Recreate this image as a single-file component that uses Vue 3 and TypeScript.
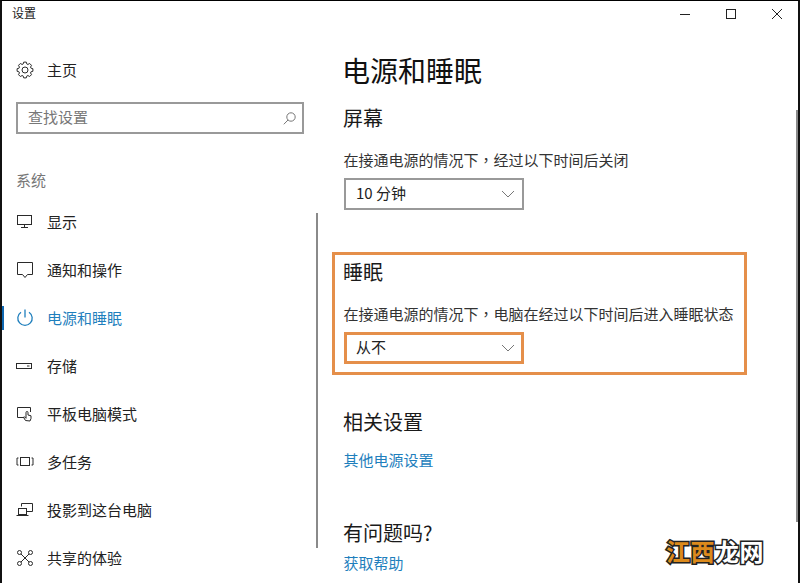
<template>
  <div class="window">
    <header class="titlebar">
      <span class="app-title">设置</span>
      <div class="controls">
        <span class="ctl"><svg width="12" height="12" viewBox="0 0 12 12"><path d="M1 6.500h10" /></svg></span>
        <span class="ctl"><svg width="12" height="12" viewBox="0 0 12 12"><rect x="1.500" y="1.500" width="9" height="9" /></svg></span>
        <span class="ctl"><svg width="12" height="12" viewBox="0 0 12 12"><path d="M1 1l10 10M11 1L1 11" /></svg></span>
      </div>
    </header>

    <div class="body">
      <aside class="sidebar">
        <div class="row home">
          <span class="icon">
            <svg width="18" height="18" viewBox="0 0 18 18"><path :d="gearPath" /><circle cx="9" cy="9" r="3" /></svg>
          </span>
          <span>主页</span>
        </div>
        <div class="search">
          <span class="label">查找设置</span>
          <svg width="13" height="13" viewBox="0 0 13 13"><circle cx="8" cy="5" r="4.200" /><path d="M5 8L.8 12.300" /></svg>
        </div>
        <div class="group-label">系统</div>
        <nav class="nav">
          <div v-for="item in navItems" :key="item.label" class="row" :class="{ active: item.active }">
            <span class="icon">
              <svg width="18" height="18" viewBox="0 0 18 18" v-html="item.icon"></svg>
            </span>
            <span>{{ item.label }}</span>
          </div>
        </nav>
        <div class="scroll side-scroll"></div>
      </aside>

      <main class="content">
        <h1>电源和睡眠</h1>
        <h2 class="screen-head">屏幕</h2>
        <p class="desc">在接通电源的情况下<span class="punct">，</span>经过以下时间后关闭</p>
        <div class="select">
          <span class="label">10 分钟</span>
          <svg width="14" height="8" viewBox="0 0 14 8"><path d="M1 1l6 6 6-6" /></svg>
        </div>

        <section class="sleep">
          <h2>睡眠</h2>
          <p class="desc">在接通电源的情况下<span class="punct">，</span>电脑在经过以下时间后进入睡眠状态</p>
          <div class="select marked">
            <span class="label">从不</span>
            <svg width="14" height="8" viewBox="0 0 14 8"><path d="M1 1l6 6 6-6" /></svg>
          </div>
        </section>

        <h2 class="related-head">相关设置</h2>
        <a class="link related-link">其他电源设置</a>
        <h2 class="help-head">有问题吗?</h2>
        <a class="link help-link">获取帮助</a>
      </main>
    </div>

    <div class="scroll main-scroll"></div>
    <div class="watermark"><span class="orange">江西</span>龙网</div>
  </div>
</template>

<script setup lang="ts">
// outline of the settings cog, 8 teeth
function buildGear(): string {
  const pts: string[] = [];
  const steps = 8;
  for (let i = 0; i < steps; i++) {
    const a = (i / steps) * Math.PI * 2;
    const spread = 0.2;
    const gap = Math.PI / steps - spread;
    const list: [number, number][] = [
      [6.2, a - spread - gap * 0.6],
      [8, a - spread * 0.8],
      [8, a + spread * 0.8],
      [6.2, a + spread + gap * 0.6],
    ];
    for (const [r, t] of list) {
      pts.push(`${(9 + r * Math.cos(t)).toFixed(2)} ${(9 + r * Math.sin(t)).toFixed(2)}`);
    }
  }
  return 'M' + pts.join('L') + 'Z';
}
const gearPath = buildGear();

const navItems = [
  {
    label: '显示',
    icon: '<rect x="1.500" y="2.500" width="14" height="9"/><path d="M8.500 11.500v3M5 14.500h7"/>',
  },
  {
    label: '通知和操作',
    icon: '<path d="M1.500 1.500h15v12h-5L9 16.500 6.500 13.500h-5z"/>',
  },
  {
    label: '电源和睡眠',
    active: true,
    icon: '<path d="M5 3.200a7.200 7.200 0 1 0 8 0M9 .5v8"/>',
  },
  {
    label: '存储',
    icon: '<rect x=".5" y="6.500" width="15" height="5"/><path d="M11 9h2.500"/>',
  },
  {
    label: '平板电脑模式',
    icon: '<path d="M8 12.500H1.500v-10h13V7"/><path d="M9.500 15.500L7.500 12.300l1-.5 1.500 1.500V7.500a1 1 0 0 1 2 0V10l3 .8v2.700l-1 2.500z"/>',
  },
  {
    label: '多任务',
    icon: '<rect x="4.500" y="4.500" width="9" height="8"/><path d="M2.500 5H1v7h1.500M15.500 5H17v7h-1.500"/>',
  },
  {
    label: '投影到这台电脑',
    icon: '<path d="M5.500 5.500v-3h11v8h-6"/><rect x="2.500" y="7.500" width="8" height="6"/><path d="M.5 14.500h12"/>',
  },
  {
    label: '共享的体验',
    icon: '<circle cx="3.500" cy="3.500" r="2"/><circle cx="14.500" cy="3.500" r="2"/><circle cx="3.500" cy="14.500" r="2"/><circle cx="14.500" cy="14.500" r="2"/><path d="M5 5l8 8M13 5l-8 8"/>',
  },
];
</script>

<style scoped>
.window {
  position: relative;
  width: 800px;
  height: 583px;
  box-sizing: border-box;
  border-top: 1px solid #000;
  border-left: 2px solid #111;
  border-right: 2px solid #111;
  background: #fff;
  color: #1a1a1a;
  font-family: "Noto Sans CJK SC", "Liberation Sans", sans-serif;
  overflow: hidden;
}
.titlebar {
  height: 26px;
  display: flex;
  align-items: center;
  justify-content: space-between;
  padding-left: 10px;
  font-size: 12px;
}
.app-title {
  padding-bottom: 3px;
}
.controls {
  display: flex;
  gap: 4px;
}
.ctl {
  width: 42px;
  height: 26px;
  display: flex;
  align-items: center;
  justify-content: center;
}
.ctl svg {
  fill: none;
  stroke: #222;
  stroke-width: 1;
}
.body {
  display: flex;
}
.sidebar {
  width: 328px;
  height: 556px;
  flex-shrink: 0;
  padding-top: 19px;
  box-sizing: border-box;
  position: relative;
}
.row {
  height: 48px;
  display: flex;
  align-items: center;
  font-size: 15px;
  line-height: 20px;
  color: #222;
  position: relative;
}
.label {
  padding-bottom: 4px;
}
.icon {
  width: 45px;
  padding-left: 14px;
  box-sizing: border-box;
  display: flex;
  flex-shrink: 0;
}
.icon svg {
  fill: none;
  stroke: #2a2a2a;
  stroke-width: 1;
}
.row.active {
  color: #1f7fbd;
}
.row.active .icon svg {
  stroke: #1f7fbd;
  stroke-width: 1.3;
}
.row.active::before {
  content: "";
  position: absolute;
  left: -1px;
  top: 12px;
  width: 3px;
  height: 24px;
  background: #0f67b1;
}
.search {
  margin: 8px 0 0 14px;
  width: 288px;
  height: 32px;
  box-sizing: border-box;
  border: 2px solid #999;
  display: flex;
  align-items: center;
  justify-content: space-between;
  padding: 0 6px 0 10px;
  font-size: 15px;
  color: #777;
}
.search svg {
  fill: none;
  stroke: #777;
  stroke-width: 1;
}
.group-label {
  margin: 36px 0 0 14px;
  height: 20px;
  line-height: 20px;
  font-size: 15px;
  color: #777;
}
.nav {
  margin-top: 8px;
}
.scroll {
  position: absolute;
  width: 2px;
  background: #8a8a8a;
}
.side-scroll {
  left: 314px;
  top: 186px;
  height: 335px;
}
.main-scroll {
  right: 0;
  top: 109px;
  height: 412px;
}
.content {
  padding: 23px 0 0 14px;
  flex: 1;
  height: 556px;
  box-sizing: border-box;
}
h1 {
  margin: 0 0 0 -2px;
  font-size: 28px;
  font-weight: 400;
  height: 40px;
  line-height: 40px;
  color: #111;
}
h2 {
  margin: 0 0 0 -1px;
  font-size: 20px;
  font-weight: 400;
  height: 28px;
  line-height: 28px;
  color: #1a1a1a;
}
.screen-head {
  margin-top: 14px;
}
.desc {
  margin: 18px 0 0 -0.5px;
  height: 20px;
  line-height: 20px;
  font-size: 15px;
  color: #333;
  white-space: nowrap;
}
.punct {
  font-family: "Noto Sans CJK TC", sans-serif;
}
.select {
  margin-top: 8px;
  width: 180px;
  height: 32px;
  box-sizing: border-box;
  border: 2px solid #999;
  display: flex;
  align-items: center;
  justify-content: space-between;
  padding: 0 7px 0 10px;
  font-size: 15px;
  color: #222;
}
.select svg {
  fill: none;
  stroke: #777;
  stroke-width: 1;
}
.select.marked {
  border: 3px solid #e58f4a;
  padding: 0 6px 0 9px;
}
.sleep {
  margin: 42px 0 0 -12px;
  width: 415px;
  box-sizing: border-box;
  border: 3px solid #e58f4a;
  padding: 3px 0 8px 9px;
}
.related-head {
  margin-top: 33px;
}
.link {
  display: block;
  margin-left: -0.5px;
  height: 20px;
  line-height: 20px;
  font-size: 15px;
  color: #1f7fbd;
}
.related-link {
  margin-top: 14px;
}
.help-head {
  margin-top: 49px;
}
.help-link {
  margin-top: 6px;
}
.watermark {
  position: absolute;
  left: 664px;
  top: 535px;
  font-size: 24px;
  line-height: 30px;
  font-weight: 700;
  color: #fff;
  letter-spacing: 0.5px;
  -webkit-text-stroke: 3px #222;
  paint-order: stroke fill;
  white-space: nowrap;
}
.orange {
  color: #dc8a1c;
}
</style>

<style>
html, body {
  margin: 0;
  background: #fff;
}
</style>
